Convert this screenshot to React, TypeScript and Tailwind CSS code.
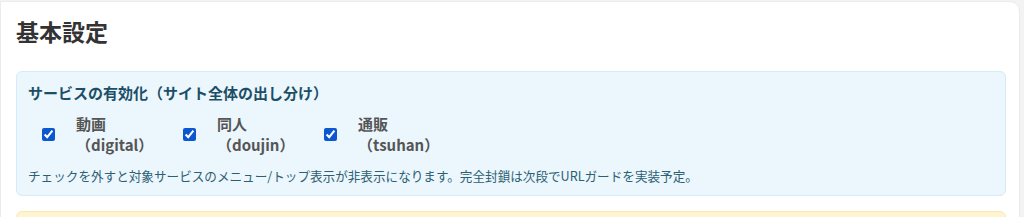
export default function App() {
  const services = [
    { key: "digital", label: "動画", x: "digital" },
    { key: "doujin", label: "同人", x: "doujin" },
    { key: "tsuhan", label: "通販", x: "tsuhan" },
  ];

  return (
    <div className="min-h-[217px] bg-[#f3f3f3] pt-px pr-[4px] font-['Noto_Sans_CJK_JP','Noto_Sans',sans-serif]">
      <div className="h-[260px] rounded-tr-[10px] border border-[#ebebeb] bg-white px-[15px] pt-[13px]">
        <h2 className="text-[23px] font-bold leading-[32px] text-[#333]">基本設定</h2>

        <div className="mt-[24px] rounded-[6px] border border-[#d6ebf9] bg-[#ebf6fd] px-[11px] pb-[10px] pt-[10px] w-[990px]">
          <h3 className="text-[15px] font-bold leading-[22px] text-[#1c4f66]">
            サービスの有効化（サイト全体の出し分け）
          </h3>
          <div className="mt-[9px] flex items-center pl-[14px]">
            {services.map((s) => (
              <label key={s.key} className="flex w-[141px] items-center">
                <input
                  type="checkbox"
                  defaultChecked
                  className="h-[13px] w-[13px] accent-[#0b57d0]"
                />
                <span className="ml-[21px] flex flex-col text-[15px] font-bold leading-[21px] text-[#555]">
                  <span>{s.label}</span>
                  <span>（{s.x}）</span>
                </span>
              </label>
            ))}
          </div>
          <p className="mt-[12px] text-[12.6px] leading-[18px] text-[#2d5f73]">
            チェックを外すと対象サービスのメニュー/トップ表示が非表示になります。完全封鎖は次段でURLガードを実装予定。
          </p>
        </div>

        <div className="mt-[15px] h-[60px] w-[990px] rounded-[6px] border border-[#fde9b0] bg-[#fff4d2]" />
      </div>
    </div>
  );
}
